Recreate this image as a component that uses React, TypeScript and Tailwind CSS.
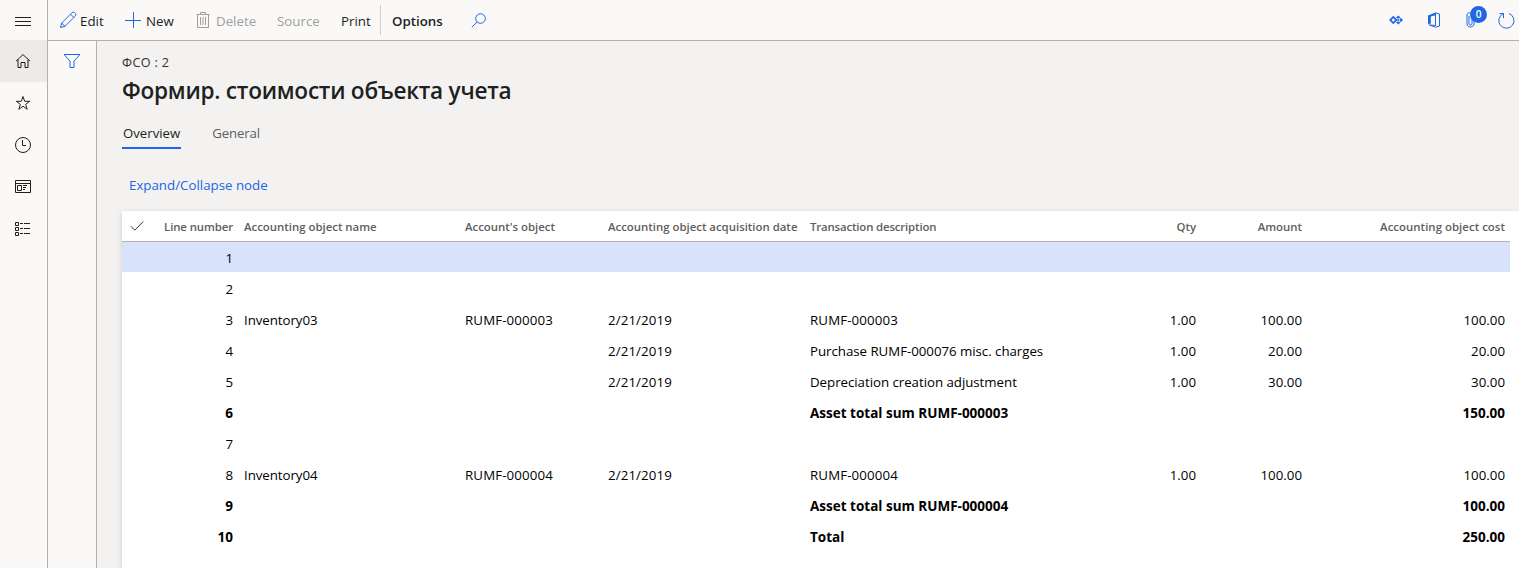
import type { ReactNode } from 'react';

type Row = {
  line: number;
  name?: string;
  object?: string;
  date?: string;
  description?: string;
  qty?: string;
  amount?: string;
  cost?: string;
  bold?: boolean;
};

const rows: Row[] = [
  { line: 1 },
  { line: 2 },
  { line: 3, name: 'Inventory03', object: 'RUMF-000003', date: '2/21/2019', description: 'RUMF-000003', qty: '1.00', amount: '100.00', cost: '100.00' },
  { line: 4, date: '2/21/2019', description: 'Purchase RUMF-000076 misc. charges', qty: '1.00', amount: '20.00', cost: '20.00' },
  { line: 5, date: '2/21/2019', description: 'Depreciation creation adjustment', qty: '1.00', amount: '30.00', cost: '30.00' },
  { line: 6, description: 'Asset total sum RUMF-000003', cost: '150.00', bold: true },
  { line: 7 },
  { line: 8, name: 'Inventory04', object: 'RUMF-000004', date: '2/21/2019', description: 'RUMF-000004', qty: '1.00', amount: '100.00', cost: '100.00' },
  { line: 9, description: 'Asset total sum RUMF-000004', cost: '100.00', bold: true },
  { line: 10, description: 'Total', cost: '250.00', bold: true },
];

const columns = 'grid grid-cols-[117px_221px_143px_202px_302px_94px_106px_203px]';

function Icon({ children, className = '', size = 18 }: { children: ReactNode; className?: string; size?: number }) {
  return (
    <svg width={size} height={size} viewBox={`0 0 ${size} ${size}`} fill="none" stroke="currentColor" strokeWidth="1" className={`shrink-0 ${className}`}>
      {children}
    </svg>
  );
}

function SideNav() {
  return (
    <nav className="flex w-12 shrink-0 flex-col border-r border-[#b3b0ad] bg-[#faf9f8] pr-px text-[#201f1e]">
      <div className="flex h-10 items-center justify-center">
        <Icon size={16} className="mt-[3px]">
          <path d="M0 3.5h16M0 7.5h16M0 11.5h16" />
        </Icon>
      </div>
      <div className="-mr-px flex h-[42px] items-center justify-center bg-[#edebe9] pr-px">
        <Icon size={16}>
          <path d="M1 8.2 8 1.6l7 6.6M3 6.5v8h3V9.5h4v5h3v-8" />
        </Icon>
      </div>
      <div className="flex h-[42px] items-center justify-center">
        <Icon size={16}>
          <path d="m8 1.500 1.650 4.800h5.100l-4.100 3.050 1.550 4.950-4.200-3.050-4.200 3.050 1.550-4.950-4.100-3.050h5.100z" />
        </Icon>
      </div>
      <div className="flex h-[42px] items-center justify-center">
        <Icon size={16}>
          <circle cx="8" cy="8" r="7.5" />
          <path d="M7.5 3v5.5H11" />
        </Icon>
      </div>
      <div className="flex h-[42px] items-center justify-center">
        <Icon size={16}>
          <path d="M.5 1.5h15v12H.5zM.5 4.5h15M2.5 6.5h4v5h-4zM8 6.5h4M8 8.5h3M8 10.5h2" />
        </Icon>
      </div>
      <div className="flex h-[42px] items-center justify-center">
        <Icon size={16}>
          <path d="M.5 1.5h3v3h-3zM.5 6.5h3v3h-3zM.5 11.5h3v3h-3zM5 2.5h3M9 2.5h6M5 7.5h3M9 7.5h6M5 12.5h3M9 12.5h6" />
        </Icon>
      </div>
    </nav>
  );
}

function Toolbar() {
  return (
    <header className="flex h-[41px] shrink-0 items-center border-b border-[#b3b0ad] bg-[#faf9f8] text-[13.3px] text-[#201f1e]">
      <div className="flex w-[77px] items-center pl-[11px]">
        <Icon className="mr-[3px] text-[#2266e3]">
          <path d="m1.5 16.5 1.1-4.4L13 1.7c1.1-1.1 2.4-.5 3.1.2.8.8 1.2 2 .2 3.1L5.9 15.4zM11.5 3.2l3.3 3.3M2.6 12.1l3.3 3.3" />
        </Icon>
        <span className="mt-[3px]">Edit</span>
      </div>
      <div className="flex w-[71px] items-center">
        <Icon size={17} className="mr-1 text-[#2266e3]">
          <path d="M8.5 0v16M0 8.5h16" />
        </Icon>
        <span className="mt-[3px]">New</span>
      </div>
      <div className="flex w-[81px] items-center text-[#a19f9d]">
        <Icon size={16} className="mr-1">
          <path d="M.5 2.5h13M4.5 2.5v-2h5v2M1.5 2.5v13h11v-13M4.5 5v8M7 5v8M9.5 5v8" />
        </Icon>
        <span className="mt-[3px]">Delete</span>
      </div>
      <span className="mt-[3px] w-16 text-[#a19f9d]">Source</span>
      <span className="mt-[3px] w-[39px]">Print</span>
      <span className="h-[30px] w-px bg-[#d2d0ce]" />
      <span className="mt-[3px] ml-[11px] w-[79px] font-semibold">Options</span>
      <Icon size={16} className="mt-px text-[#2266e3]">
        <circle cx="9.5" cy="5.5" r="4.8" />
        <path d="M6 9 .8 14.2" />
      </Icon>
      <div className="ml-auto flex items-center text-[#2266e3]">
        <svg width="14" height="10" viewBox="0 0 14 10" fill="none" stroke="currentColor" strokeWidth="1.8" className="mr-6">
          <path d="M4.3 1.9 7.400 5 4.3 8.1 1.200 5z" />
          <path d="M7.8 3.200 9.300 1.700l1.300 1.300M7.8 6.800l1.500 1.500L10.600 7M9.300 5h.1M11.200 3.500 12.700 5l-1.500 1.500" />
          <path d="M9.300 3.800 10.500 5 9.300 6.200 8.100 5z" fill="currentColor" stroke="none" />
        </svg>
        <svg width="14" height="16" viewBox="0 0 14 16" fill="none" stroke="currentColor" className="mr-[25px]">
          <path d="M8.5.8 12.5 2v12l-4 1.200-6-2.200 6 .5zM8.500 2.500v11" />
          <path d="M8.5.5 1 3.5v9l2.800-1V4.500l4.700-1.300z" fill="currentColor" stroke="none" />
        </svg>
        <div className="relative mr-[22px] h-4 w-2.5">
          <svg width="10" height="16" viewBox="0 0 10 16" fill="none" stroke="currentColor">
            <path d="M8 4v8c0 4-7 4-7 0V3c0-3 5-3 5 0v9c0 1.5-3 1.5-3 0V4" />
          </svg>
          <span className="absolute -top-[6px] left-[4px] flex h-[17px] w-[17px] items-center justify-center rounded-full bg-[#2266e3] text-[10px] font-semibold text-white">0</span>
        </div>
        <Icon size={17} className="mr-1">
          <path d="M5.500 1.600A7.600 7.600 0 1 0 11 1.500M1.500 1.500h4v4.500" />
        </Icon>
      </div>
    </header>
  );
}

function Grid() {
  return (
    <section className="ml-[25px] grow bg-white shadow-[0_2px_6px_rgba(0,0,0,0.15)]">
      <div className="w-[1388px]">
        <div className={`${columns} h-[31px] items-center border-b border-[#b3b0ad] pt-0.5 text-[11.4px] font-semibold text-[#605e5c]`}>
          <div className="flex items-center justify-between pr-1.5 pl-2">
            <Icon size={14} className="-mt-0.5 text-[#323130]">
              <path d="m.8 7.2 4 4L13.2 2.6" />
            </Icon>
            <span className="tracking-[-0.1px]">Line number</span>
          </div>
          <span className="pl-[5px]">Accounting object name</span>
          <span className="pl-[5px]">Account's object</span>
          <span className="pl-[5px] whitespace-nowrap">Accounting object acquisition date</span>
          <span className="pl-[5px] tracking-[-0.15px]">Transaction description</span>
          <span className="pr-[5px] text-right">Qty</span>
          <span className="pr-[5px] text-right">Amount</span>
          <span className="pr-[5px] text-right tracking-[0.04px]">Accounting object cost</span>
        </div>
        {rows.map((r) => (
          <div
            key={r.line}
            className={`${columns} h-[31px] items-center border-b border-white pt-[3px] text-black ${r.bold ? 'text-[13.5px] font-bold' : 'text-[13.3px]'} ${r.line === 1 ? 'bg-[#d8e3fb]' : ''}`}
          >
            <span className="pr-1.5 text-right">{r.line}</span>
            <span className="pl-[5px] tracking-[-0.06px]">{r.name}</span>
            <span className="pl-[5px] tracking-[0.12px]">{r.object}</span>
            <span className="pl-[5px] tracking-[0.1px]">{r.date}</span>
            <span className={`pl-[5px] whitespace-nowrap ${r.description?.startsWith('RUMF') ? 'tracking-[0.12px]' : r.bold ? '' : 'tracking-[-0.04px]'}`}>{r.description}</span>
            <span className="pr-[5px] text-right">{r.qty}</span>
            <span className="pr-[5px] text-right">{r.amount}</span>
            <span className="pr-[5px] text-right">{r.cost}</span>
          </div>
        ))}
      </div>
    </section>
  );
}

export default function App() {
  return (
    <div className="flex h-[568px] w-[1519px] overflow-hidden bg-[#f3f2f1] font-['Open_Sans','Noto_Sans',sans-serif]">
      <SideNav />
      <div className="flex min-w-0 grow flex-col">
        <Toolbar />
        <div className="flex min-h-0 grow">
          <aside className="flex w-[49px] shrink-0 justify-center border-r border-[#b3b0ad] bg-[#faf9f8] pt-3 pr-px text-[#2266e3]">
            <Icon size={16}>
              <path d="M0 1.5h16L10 8v6.5H6V8z" />
            </Icon>
          </aside>
          <main className="flex min-w-0 grow flex-col">
            <div className="pl-[25px]">
              <p className="mt-3 h-5 text-[12.6px] leading-5 tracking-[0.35px] text-[#323130]">ФСО : 2</p>
              <h1 className="mt-[2px] h-8 text-[22.6px] leading-8 font-semibold tracking-[-0.25px] text-[#201f1e]">Формир. стоимости объекта учета</h1>
              <div className="mt-4 flex h-[26px] text-[13.2px] leading-5">
                <span className="mr-[31px] border-b-2 border-[#2266e3] px-px text-[#201f1e]">Overview</span>
                <span className="tracking-[-0.12px] text-[#605e5c]">General</span>
              </div>
              <button className="mt-[26px] block h-5 pl-[7px] text-left text-[13.3px] leading-5 text-[#2266e3]">Expand/Collapse node</button>
            </div>
            <div className="mt-[16px] flex grow">
              <Grid />
            </div>
          </main>
        </div>
      </div>
    </div>
  );
}
